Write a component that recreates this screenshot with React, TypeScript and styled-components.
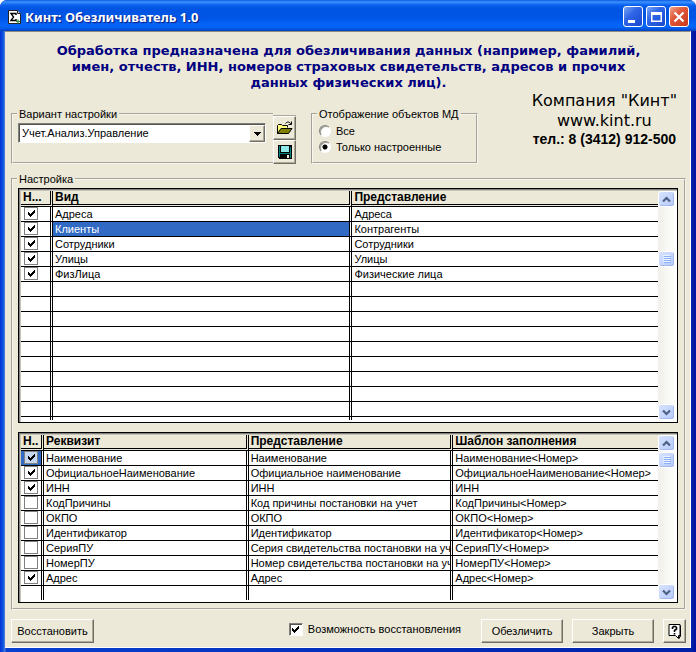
import React from "react";
import styled, { createGlobalStyle } from "styled-components";

const face = "#ece9d8";
const ui = '"Liberation Sans", Arial, sans-serif';

const GlobalStyle = createGlobalStyle`
  * { box-sizing: border-box; }
  body { margin: 0; background: #fff; font: 11px/14px ${ui}; color: #000; }
  button, select, input { font: inherit; color: inherit; margin: 0; }
`;

const Window = styled.main`
  display: flex;
  flex-direction: column;
  min-height: 100vh;
  padding: 0 5px 4px;
  border-radius: 7px 7px 0 0;
  background: linear-gradient(90deg, #0831d9 0, #0855dd 3px, #5a7edc 5px, #0840d0 6px, #0020a8 calc(100% - 4px), #0010a0 100%);
  overflow: hidden;
`;

const TitleBar = styled.header`
  display: flex;
  align-items: center;
  gap: 3px;
  height: 31px;
  margin: 0 -5px;
  padding: 2px 7px 0 8px;
  background: linear-gradient(#0a5be0 0, #3c92ff 2px, #0a62ee 5px, #0054e3 9px, #0055e5 18px, #0566fb 25px, #0560f0 28px, #0040c0 31px);
`;

const TitleText = styled.h1`
  flex: 1;
  margin: 0 0 0 1px;
  font: bold 13px/18px "Noto Sans", sans-serif;
  color: #fff;
  text-shadow: 1px 1px 1px #0a1883;
`;

const CaptionButton = styled.button<{ $close?: boolean }>`
  display: grid;
  place-items: center;
  width: 20px;
  height: 21px;
  padding: 0;
  border: 1px solid #fff;
  border-radius: 3px;
  background: ${(p) =>
    p.$close
      ? "linear-gradient(135deg, #f0a58c, #e0583a 40%, #c8391c)"
      : "linear-gradient(135deg, #7aa5f4, #2f66e6 40%, #1947cf)"};
`;

const Client = styled.div`
  flex: 1;
  display: flex;
  flex-direction: column;
  padding: 11px 4px 4px 6px;
  border-top: 1px solid #8f8d80;
  border-right: 1px solid #fff;
  border-bottom: 1px solid #fff;
  background: ${face};
`;

const Intro = styled.p`
  margin: 0 42px;
  font: bold 13px/16px "DejaVu Sans", sans-serif;
  color: #000080;
  text-align: center;
`;

const Settings = styled.div`
  display: flex;
  align-items: flex-end;
  min-height: 73px;
`;

const Group = styled.fieldset<{ $open?: boolean }>`
  min-width: 0;
  margin: 0;
  padding: 0 5px;
  border: 2px groove #f8f6ec;
  ${(p) => p.$open && "border-right: 0;"}
`;

const Legend = styled.legend`
  padding: 0 2px;
  margin-left: -1px;
  line-height: 14px;
  white-space: nowrap;
`;

const VariantGroup = styled(Group)`
  flex: 0 1 262px;
  height: 57px;
`;

const FilterGroup = styled(Group)`
  flex: 0 0 167px;
  height: 57px;
  margin-left: 15px;
`;

const Combo = styled.div`
  display: flex;
  align-items: stretch;
  height: 20px;
  margin: 2px 2px 0 0;
  border: 1px solid;
  border-color: #808080 #fff #fff #808080;
  box-shadow: inset 1px 1px 0 #55534a;
  background: #fff;
`;

const Select = styled.select`
  flex: 1;
  min-width: 0;
  padding: 0 3px;
  border: 0;
  appearance: none;
  background: transparent;
`;

const raised = `
  border: 1px solid;
  border-color: #fff #716f64 #716f64 #fff;
  box-shadow: inset -1px -1px 0 #aca899;
  background: ${face};
`;

const ComboArrow = styled.span`
  display: grid;
  place-items: center;
  width: 16px;
  margin: 1px 0 0;
  ${raised}
`;

const Tools = styled.div`
  display: flex;
  flex-direction: column;
  width: 23px;
  border-top: 1px solid #aca899;
`;

const PushButton = styled.button<{ $width?: number }>`
  display: grid;
  place-items: center;
  width: ${(p) => p.$width ?? 23}px;
  height: 24px;
  padding: 0;
  white-space: nowrap;
  ${raised}
`;

const Options = styled.div`
  padding-top: 2px;
`;

const Option = styled.label`
  display: flex;
  align-items: center;
  gap: 5px;
  height: 16px;
  padding-left: 1px;
`;

const Radio = styled.input`
  appearance: none;
  width: 12px;
  height: 12px;
  border: 1px solid;
  border-color: #808080 #fff #fff #808080;
  border-radius: 50%;
  background: #fff;
  box-shadow: inset 1px 1px 0 #a09d90;
  &:checked {
    background: radial-gradient(circle, #000 0 2px, #fff 3px);
  }
`;

const Company = styled.div`
  flex: 1;
  align-self: flex-start;
  display: flex;
  justify-content: flex-end;
  padding-right: 9px;
`;

const CompanyLines = styled.address`
  text-align: center;
  font: normal 16px/20px "DejaVu Sans", sans-serif;
  white-space: nowrap;
`;

const Phone = styled.div`
  font: bold 14px/17px ${ui};
`;

const TablesGroup = styled(Group)`
  margin-top: 8px;
  padding: 2px 6px 5px 5px;
`;

const ListBox = styled.div<{ $height: number }>`
  display: flex;
  height: ${(p) => p.$height}px;
  border: 1px solid #000;
  padding: 2px 2px 2px 2px;
  background: #fff;
  box-shadow: inset 1px 1px 0 #808080, inset 2px 2px 0 #c8c5b8;
  & + & {
    margin-top: 9px;
  }
`;

const GridPane = styled.div`
  flex: 1;
  min-width: 0;
  overflow: hidden;
`;

const Grid = styled.table`
  width: 100%;
  table-layout: fixed;
  border-collapse: separate;
  border-spacing: 0;
`;

const Col = styled.col<{ $width?: string }>`
  width: ${(p) => p.$width ?? "auto"};
`;

const HeadCell = styled.th`
  height: 16px;
  padding: 0 0 0 2px;
  border-bottom: 3px double #000;
  border-right: 3px double #000;
  background: ${face};
  font: bold 12px/13px ${ui};
  text-align: left;
  white-space: nowrap;
  overflow: hidden;
  &:last-child {
    border-right: 0;
  }
`;

const Cell = styled.td<{ $selected?: boolean }>`
  height: 15px;
  padding: 0 0 0 2px;
  border-bottom: 1px solid #000;
  border-right: 3px double #000;
  line-height: 14px;
  white-space: nowrap;
  overflow: hidden;
  color: ${(p) => (p.$selected ? "#fff" : "#000")};
  background: ${(p) => (p.$selected ? "#316ac5" : "#fff")};
  background-clip: padding-box;
  &:first-child {
    padding-left: 3px;
  }
  &:last-child {
    border-right: 0;
  }
`;

const TickBox = styled.span`
  display: inline-grid;
  place-items: center;
  vertical-align: top;
  & > * {
    grid-area: 1 / 1;
  }
  svg {
    pointer-events: none;
  }
`;

const TickInput = styled.input<{ $selected?: boolean; $sunken?: boolean }>`
  appearance: none;
  width: 14px;
  height: 13px;
  border: 1px solid;
  border-color: ${(p) => (p.$sunken ? "#808080 #fff #fff #808080" : "#808080")};
  box-shadow: ${(p) => (p.$sunken ? "inset 1px 1px 0 #55534a" : "none")};
  background: ${(p) => (p.$selected ? "#c6d5f0" : "#fff")};
`;

const ScrollBar = styled.div`
  display: flex;
  flex-direction: column;
  width: 17px;
  background: linear-gradient(90deg, #f1f0ea, #fdfdfb);
`;

const ScrollButton = styled.button`
  display: grid;
  place-items: center;
  height: 16px;
  padding: 0;
  border: 1px solid #fff;
  border-radius: 3px;
  background: linear-gradient(135deg, #d6e2fe, #b7cafa);
  box-shadow: inset -1px -1px 0 #a3b8ec;
`;

const Track = styled.div<{ $grow: number }>`
  flex: ${(p) => p.$grow} 1 0;
`;

const Footer = styled.footer`
  display: flex;
  align-items: center;
  margin-top: 9px;
  gap: 9px;
`;

const Restore = styled.label`
  display: flex;
  align-items: center;
  gap: 5px;
  margin: 0 11px 4px auto;
`;

function Tick() {
  return (
    <svg width="9" height="9" viewBox="0 0 9 9" aria-hidden="true" shapeRendering="crispEdges">
      <path d="M1 3h1v1h1v1h1V4h1V3h1V2h1V1h1v3H7v1H6v1H5v1H4v1H3V7H2V6H1z" fill="#000" />
    </svg>
  );
}

function Check(props: { checked: boolean; selected?: boolean; sunken?: boolean; label?: string }) {
  return (
    <TickBox>
      <TickInput
        type="checkbox"
        aria-label={props.label}
        defaultChecked={props.checked}
        $selected={props.selected}
        $sunken={props.sunken}
      />
      {props.checked && <Tick />}
    </TickBox>
  );
}

function Chevron({ down }: { down?: boolean }) {
  return (
    <svg width="9" height="7" viewBox="0 0 9 7" aria-hidden="true">
      <path d={down ? "M1 1.5l3.500 3.500 3.500-3.500" : "M1 5.500l3.500-3.500 3.500 3.500"} fill="none" stroke="#4d6185" strokeWidth="2.200" />
    </svg>
  );
}

function Scroll({ before, after }: { before: number; after: number }) {
  return (
    <ScrollBar>
      <ScrollButton aria-label="Вверх"><Chevron /></ScrollButton>
      <Track $grow={before} />
      <ScrollButton aria-label="Полоса прокрутки">
        <svg width="8" height="8" viewBox="0 0 8 8" aria-hidden="true" shapeRendering="crispEdges">
          <path d="M0 .5h7M0 2.500h7M0 4.500h7M0 6.500h7" stroke="#eef4fe" />
          <path d="M1 1.500h7M1 3.500h7M1 5.500h7M1 7.500h7" stroke="#8cb0f8" />
        </svg>
      </ScrollButton>
      <Track $grow={after} />
      <ScrollButton aria-label="Вниз"><Chevron down /></ScrollButton>
    </ScrollBar>
  );
}

type Row = { on: boolean; cells: string[] };

function DataGrid(props: {
  heads: string[];
  widths: (string | undefined)[];
  rows: Row[];
  blanks: number;
  selected: [number, number];
}) {
  const { heads, widths, rows, blanks, selected } = props;
  const isSelected = (r: number, c: number) => selected[0] === r && selected[1] === c;
  return (
    <GridPane>
      <Grid>
        <colgroup>
          {widths.map((w, i) => <Col key={i} $width={w} />)}
        </colgroup>
        <thead>
          <tr>{heads.map((h) => <HeadCell key={h}>{h}</HeadCell>)}</tr>
        </thead>
        <tbody>
          {rows.map((row, r) => (
            <tr key={r}>
              <Cell $selected={isSelected(r, 0)}>
                <Check checked={row.on} selected={isSelected(r, 0)} label={row.cells[0]} />
              </Cell>
              {row.cells.map((text, c) => (
                <Cell key={c} $selected={isSelected(r, c + 1)}>{text}</Cell>
              ))}
            </tr>
          ))}
          {Array.from({ length: blanks }, (_, r) => (
            <tr key={`blank-${r}`}>{heads.map((h) => <Cell key={h} />)}</tr>
          ))}
        </tbody>
      </Grid>
    </GridPane>
  );
}

const kinds: Row[] = [
  { on: true, cells: ["Адреса", "Адреса"] },
  { on: true, cells: ["Клиенты", "Контрагенты"] },
  { on: true, cells: ["Сотрудники", "Сотрудники"] },
  { on: true, cells: ["Улицы", "Улицы"] },
  { on: true, cells: ["ФизЛица", "Физические лица"] },
];

const fields: Row[] = [
  { on: true, cells: ["Наименование", "Наименование", "Наименование<Номер>"] },
  { on: true, cells: ["ОфициальноеНаименование", "Официальное наименование", "ОфициальноеНаименование<Номер>"] },
  { on: true, cells: ["ИНН", "ИНН", "ИНН"] },
  { on: false, cells: ["КодПричины", "Код причины постановки на учет", "КодПричины<Номер>"] },
  { on: false, cells: ["ОКПО", "ОКПО", "ОКПО<Номер>"] },
  { on: false, cells: ["Идентификатор", "Идентификатор", "Идентификатор<Номер>"] },
  { on: false, cells: ["СерияПУ", "Серия свидетельства постановки на учет", "СерияПУ<Номер>"] },
  { on: false, cells: ["НомерПУ", "Номер свидетельства постановки на учет", "НомерПУ<Номер>"] },
  { on: true, cells: ["Адрес", "Адрес", "Адрес<Номер>"] },
];

export default function App() {
  return (
    <>
      <GlobalStyle />
      <Window>
        <TitleBar>
          <svg width="13" height="14" viewBox="0 0 13 14" aria-hidden="true">
            <path d="M.5.5h9l3 3v10H.5z" fill="#fff" stroke="#222" />
            <path d="M9.500.5v3h3" fill="#ddd" stroke="#222" />
            <path d="M8 5V3.500H3L5.500 7 3 10.500h5V9" fill="none" stroke="#000" strokeWidth="1.400" />
            <path d="M8 11.500h4M10 9.500v4" stroke="#2a8a3a" strokeWidth="1.200" />
          </svg>
          <TitleText>Кинт: Обезличиватель 1.0</TitleText>
          <CaptionButton aria-label="Свернуть">
            <svg width="14" height="14" viewBox="0 0 14 14"><path d="M2 10h7v3H2z" fill="#fff" /></svg>
          </CaptionButton>
          <CaptionButton aria-label="Развернуть">
            <svg width="14" height="14" viewBox="0 0 14 14">
              <path d="M2 2h11v10H2zM3.500 5v5.500h8V5z" fill="#fff" fillRule="evenodd" />
            </svg>
          </CaptionButton>
          <CaptionButton aria-label="Закрыть окно" $close>
            <svg width="14" height="14" viewBox="0 0 14 14">
              <path d="M2.500 2.500l9 9M11.500 2.500l-9 9" stroke="#fff" strokeWidth="2.200" />
            </svg>
          </CaptionButton>
        </TitleBar>

        <Client>
          <Intro>
            Обработка предназначена для обезличивания данных (например, фамилий, имен, отчеств, ИНН,
            номеров страховых свидетельств, адресов и прочих данных физических лиц).
          </Intro>

          <Settings>
            <VariantGroup $open>
              <Legend>Вариант настройки</Legend>
              <Combo>
                <Select aria-label="Вариант настройки" defaultValue="uau">
                  <option value="uau">Учет.Анализ.Управление</option>
                </Select>
                <ComboArrow>
                  <svg width="7" height="4" viewBox="0 0 7 4" aria-hidden="true" shapeRendering="crispEdges">
                    <path d="M0 0h7v1H6v1H5v1H4v1H3V3H2V2H1V1H0z" />
                  </svg>
                </ComboArrow>
              </Combo>
            </VariantGroup>
            <Tools>
              <PushButton aria-label="Открыть">
                <svg width="16" height="14" viewBox="0 0 16 14" aria-hidden="true">
                  <path d="M.5 12.500v-8l1-1h3l1 1h5v2" fill="#ffff80" stroke="#000" />
                  <path d="M.5 12.500l3.500-5h11l-3.500 5z" fill="#808000" stroke="#000" />
                  <path d="M8.500 2.500c1.500-2 4-2 5.500.5M14.500.5v3h-3" fill="none" stroke="#000" />
                </svg>
              </PushButton>
              <PushButton aria-label="Сохранить">
                <svg width="14" height="14" viewBox="0 0 14 14" aria-hidden="true" shapeRendering="crispEdges">
                  <path d="M0 0h14v14H1l-1-1z" />
                  <path d="M1 1h1v11H1zM12 2h1v11h-1zM2 8h10v1H2z" fill="#008080" />
                  <path d="M3 1h8v6H3z" fill="#8fe8e8" />
                  <path d="M9 10h2v3H9z" fill="#ece9d8" />
                </svg>
              </PushButton>
            </Tools>
            <FilterGroup>
              <Legend>Отображение объектов МД</Legend>
              <Options>
                <Option><Radio type="radio" name="filter" />Все</Option>
                <Option><Radio type="radio" name="filter" defaultChecked />Только настроенные</Option>
              </Options>
            </FilterGroup>
            <Company>
              <CompanyLines>
                <div>Компания "Кинт"</div>
                <div>www.kint.ru</div>
                <Phone>тел.: 8 (3412) 912-500</Phone>
              </CompanyLines>
            </Company>
          </Settings>

          <TablesGroup>
            <Legend>Настройка</Legend>
            <ListBox $height={235}>
              <DataGrid
                heads={["Н...", "Вид", "Представление"]}
                widths={["32px", "47%", undefined]}
                rows={kinds}
                blanks={10}
                selected={[1, 1]}
              />
              <Scroll before={46} after={142} />
            </ListBox>
            <ListBox $height={171}>
              <DataGrid
                heads={["Н..", "Реквизит", "Представление", "Шаблон заполнения"]}
                widths={["23px", undefined, undefined, undefined]}
                rows={fields}
                blanks={1}
                selected={[0, 0]}
              />
              <Scroll before={1} after={115} />
            </ListBox>
          </TablesGroup>

          <Footer>
            <PushButton $width={83}>Восстановить</PushButton>
            <Restore>
              <Check checked sunken />
              Возможность восстановления
            </Restore>
            <PushButton $width={82}>Обезличить</PushButton>
            <PushButton $width={82}>Закрыть</PushButton>
            <PushButton aria-label="Справка">
              <svg width="14" height="15" viewBox="0 0 14 15" aria-hidden="true">
                <path d="M1 .5h11v11h-1.500v3l-3-3H1z" fill="#fff" stroke="#000" />
                <path d="M12.500 1.500v11h-1v2" fill="none" stroke="#000" />
                <path d="M4.500 5V3.500l1-1h2l1 1V5L6.500 6.500V8M6.500 9v1.500" fill="none" stroke="#000" strokeWidth="1.600" />
              </svg>
            </PushButton>
          </Footer>
        </Client>
      </Window>
    </>
  );
}
